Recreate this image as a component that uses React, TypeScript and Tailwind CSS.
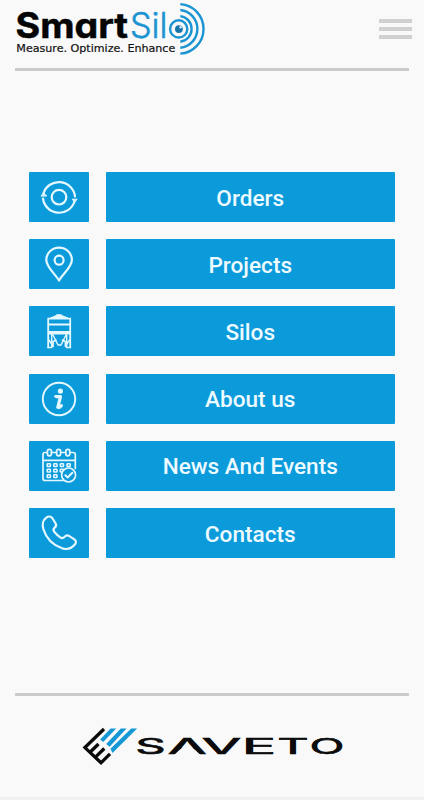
import type { ReactNode } from "react";

function SmartSiloLogo() {
  return (
    <svg width="194" height="58" viewBox="14 0 194 58" role="img" aria-label="SmartSilo">
      <text x="15.6" y="38" fontSize="35" fontWeight="700" textLength="112.5" lengthAdjust="spacingAndGlyphs" fill="#050505" stroke="#050505" strokeWidth="0.5" className="font-['Inter',sans-serif] [font-feature-settings:'cv11','ss03']">Smart</text>
      <text x="130" y="38" fontSize="35" fontWeight="300" textLength="37.5" lengthAdjust="spacingAndGlyphs" fill="#1b94d2" stroke="#1b94d2" strokeWidth="0.6" className="font-['Inter',sans-serif]">Sil</text>
      <text x="16.3" y="52.4" fontSize="10.6" textLength="159" lengthAdjust="spacingAndGlyphs" fill="#111" stroke="#111" strokeWidth="0.2" className="font-['DejaVu_Sans',sans-serif]">Measure. Optimize. Enhance</text>
      <g fill="none" stroke="#1b94d2" strokeWidth="2.4">
        <circle cx="178.7" cy="28.9" r="8.6" />
        <path d="M180.3 16.1A12.9 12.9 0 0 1 180.3 41.7" />
        <path d="M180.3 10A19 19 0 0 1 180.3 47.8" />
        <path d="M180.3 4.15A24.8 24.8 0 0 1 180.3 53.65" />
      </g>
      <circle cx="178.9" cy="29.1" r="3.9" fill="#1675ad" />
      <circle cx="180.6" cy="27.2" r="1.2" fill="#d9effa" />
    </svg>
  );
}

function SavetoLogo() {
  return (
    <svg width="264" height="42" viewBox="80 725 264 42" role="img" aria-label="Saveto">
      <g fill="none" stroke="#0b0b0b" strokeWidth="3.3">
        <path d="M104 729 84.9 747.6 101 762.8 110 753.8" />
        <path d="M90 752.3 98.5 744" />
        <path d="M95.2 757.4 104.3 748.5" />
      </g>
      <g fill="#1497d5">
        <path d="M110.6 728.5h5.6L103.2 742l-3.1-2.6z" />
        <path d="M120.8 728.5h5.7L109.6 746.8l-3.4-2.7z" />
        <path d="M131.2 728.5h5.9L112.5 752.9l-2-4.2z" />
      </g>
      <g fill="#0b0b0b" stroke="#0b0b0b" strokeWidth="0.7" fontSize="21.5" fontWeight="400" className="font-['Inter',sans-serif]">
        <text x="135.5" y="754.4" textLength="30" lengthAdjust="spacingAndGlyphs">S</text>
        <text x="168" y="754.4" textLength="38.5" lengthAdjust="spacingAndGlyphs">A</text>
        <text x="202" y="754.4" textLength="39" lengthAdjust="spacingAndGlyphs">V</text>
        <text x="242" y="754.4" textLength="34" lengthAdjust="spacingAndGlyphs">E</text>
        <text x="277.5" y="754.4" textLength="31" lengthAdjust="spacingAndGlyphs">T</text>
        <text x="309.8" y="754.4" textLength="34.5" lengthAdjust="spacingAndGlyphs">O</text>
      </g>
      <path d="M187.3 743 201 755.5H173.6z" fill="#f9f9f9" />
    </svg>
  );
}

function Icon({ children }: { children: ReactNode }) {
  return (
    <svg width="60" height="50" viewBox="0 0 60 50" fill="none" stroke="#e5f7ff" strokeWidth="2.2" strokeLinecap="round" strokeLinejoin="round">
      {children}
    </svg>
  );
}

const ordersIcon = (
  <Icon>
    <circle cx="30" cy="25.2" r="7.3" />
    <path d="M14.4 21.5A16.2 16.2 0 0 1 46 24.5M45.5 29.5A16.2 16.2 0 0 1 14 26.5" />
    <path d="m12.2 23.8 2.4-3.1 2.8 3.1zM43.6 27.2h4.5L45.8 30z" fill="#e5f7ff" strokeWidth="1" />
  </Icon>
);

const projectsIcon = (
  <Icon>
    <path d="M30 41.5C27 36 17.3 28 17.3 20.9a12.8 12.2 0 0 1 25.6 0C42.9 28 33 36 30 41.5Z" />
    <circle cx="30.1" cy="21.2" r="4.5" />
  </Icon>
);

const silosIcon = (
  <Icon>
    <path d="M19.6 13C23 11 27 10.5 28 8.8h4c1 1.7 5 2.2 8.8 4.2z" fill="#e5f7ff" strokeWidth="1.2" />
    <path d="M19.2 12.5v28.8M41.2 12.5v28.8M19.6 18.5h21.2M19.6 26h21.2M19.6 27.7h21.2" strokeWidth="1.8" />
    <path d="M22.7 28v13M37.7 28v13M24 29l5 10h3L37 29M20 34l4.2 6.5v-5l3-1.5M40.5 34l-4.2 6.5v-5l-3-1.5M18.8 41.5h4M37.5 41.5h4" strokeWidth="1.4" />
  </Icon>
);

const aboutIcon = (
  <Icon>
    <circle cx="30" cy="25" r="16.2" strokeWidth="1.9" />
    <circle cx="31.4" cy="17.1" r="2.6" fill="#e5f7ff" stroke="none" />
    <path d="M27.3 22.6h4.2l-2.4 9.5c-.4 1.8 1.2 1.8 3.3-.4" strokeWidth="3.2" />
    <path d="M26 22.2h4M28.2 33.6h3" strokeWidth="2" />
  </Icon>
);

const newsIcon = (
  <Icon>
    <g strokeWidth="1.7">
      <path d="M34 39.5H16q-2 0-2-2V13.5q0-2 2-2h2.4M22.4 11.5h5.2M31.6 11.5h5.1M40.7 11.5h3.6q2 0 2 2v14M14 19.3h32" />
      <rect x="18.4" y="8.4" width="4" height="6.4" rx="2" />
      <rect x="27.6" y="8.4" width="4" height="6.4" rx="2" />
      <rect x="36.8" y="8.4" width="4" height="6.4" rx="2" />
      {[22.8, 28.3, 33.8].map((y) =>
        [18.2, 24.8, 31.3, 38].map((x) =>
          x > 30 && y > 30 ? null : <rect key={`${x}-${y}`} x={x} y={y} width="3.2" height="2.7" rx=".6" strokeWidth="1.6" />
        )
      )}
      <circle cx="39.6" cy="34" r="7" fill="#0b9bdb" />
      <path d="m36.4 34.2 2.3 2.3 4.6-4.7" strokeWidth="2" />
    </g>
  </Icon>
);

const contactsIcon = (
  <Icon>
    <path d="M17.3 9.7C19.3 8 21.8 8.1 23.2 10l3.2 5c1.2 1.8.9 3.3-.7 4.6-1.7 1.4-1.7 2.3-.5 4 1.8 2.4 3.7 4.2 6.1 5.8 1.8 1.2 2.9 1 4.2-.5 1.5-1.7 3-2.1 4.8-.8l5.1 3.3c1.8 1.4 2 3.3.4 5.1-3.1 3.7-7.6 5.6-12.8 3.7C24.3 37.3 17.3 30.3 14.5 21.5c-1.5-4.5-.8-9 2.8-11.8Z" />
  </Icon>
);

const items = [
  { label: "Orders", icon: ordersIcon },
  { label: "Projects", icon: projectsIcon },
  { label: "Silos", icon: silosIcon },
  { label: "About us", icon: aboutIcon },
  { label: "News And Events", icon: newsIcon },
  { label: "Contacts", icon: contactsIcon },
];

export default function App() {
  return (
    <div className="flex h-[800px] w-[424px] flex-col overflow-hidden border-b-[3px] border-[#f0f0f0] bg-[#f9f9f9] font-['Roboto',sans-serif]">
      <header className="mx-[15px] flex h-[71px] shrink-0 items-start justify-between border-b-[3px] border-[#cbcbcb]">
        <div className="-ml-px"><SmartSiloLogo /></div>
        <button aria-label="Menu" className="-mr-[2.5px] mt-[18.5px] flex w-[33px] flex-col gap-1">
          <span className="h-1 bg-[#d0d0d0]" />
          <span className="h-1 bg-[#d0d0d0]" />
          <span className="h-1 bg-[#d0d0d0]" />
        </button>
      </header>
      <main className="flex flex-1 flex-col gap-[17.2px] pl-[29px] pr-[29.5px] pt-[101px]">
        {items.map(({ label, icon }) => (
          <div key={label} className="flex h-[50px] gap-[17px]">
            <div className="w-[60px] rounded-[1px] bg-[#0b9bdb]">{icon}</div>
            <button className="flex-1 rounded-[1px] bg-[#0b9bdb] pt-1 text-[22.6px] font-medium leading-none text-[#edfaff]">{label}</button>
          </div>
        ))}
      </main>
      <footer className="mx-[15px] flex h-[104px] shrink-0 border-t-[3px] border-[#cbcbcb] pl-[65px] pt-[29px]">
        <SavetoLogo />
      </footer>
    </div>
  );
}
